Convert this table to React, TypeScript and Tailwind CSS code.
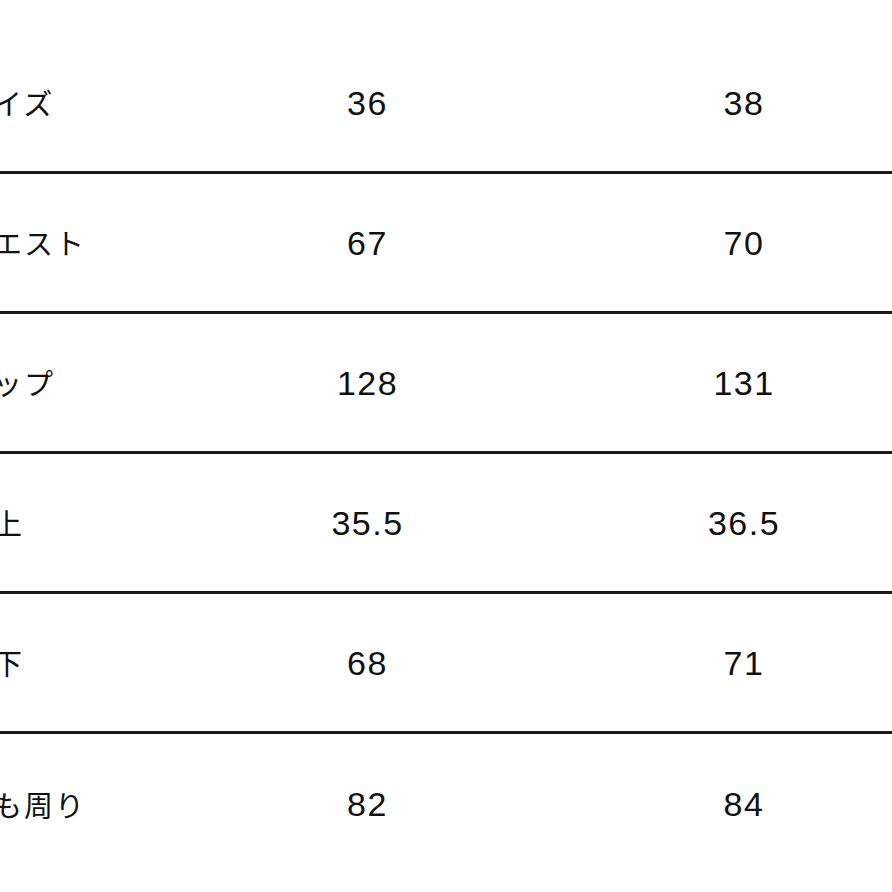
const rows = [
  { label: "サイズ", a: "36", b: "38" },
  { label: "ウエスト", a: "67", b: "70" },
  { label: "ヒップ", a: "128", b: "131" },
  { label: "股上", a: "35.5", b: "36.5" },
  { label: "股下", a: "68", b: "71" },
  { label: "もも周り", a: "82", b: "84" },
];

export default function App() {
  return (
    <div className="w-[892px] h-[892px] overflow-hidden bg-white pt-[34px] text-[#111]">
      <div className="-ml-[40px] w-[972px]">
        {rows.map((row, i) => (
          <div
            key={row.label}
            className={
              "grid grid-cols-[219px_377px_376px] items-center h-[140px] " +
              (i < rows.length - 1 ? "border-b-[3px] border-[#1a1a1a]" : "")
            }
          >
            <div className="pl-[2px] text-[29px] tracking-[2px] font-['Noto_Sans_CJK_JP',sans-serif] leading-none">
              {row.label}
            </div>
            <div className="text-center text-[34px] tracking-[1.5px] font-['Liberation_Sans',sans-serif] leading-none">
              {row.a}
            </div>
            <div className="text-center text-[34px] tracking-[1.5px] font-['Liberation_Sans',sans-serif] leading-none">
              {row.b}
            </div>
          </div>
        ))}
      </div>
    </div>
  );
}
